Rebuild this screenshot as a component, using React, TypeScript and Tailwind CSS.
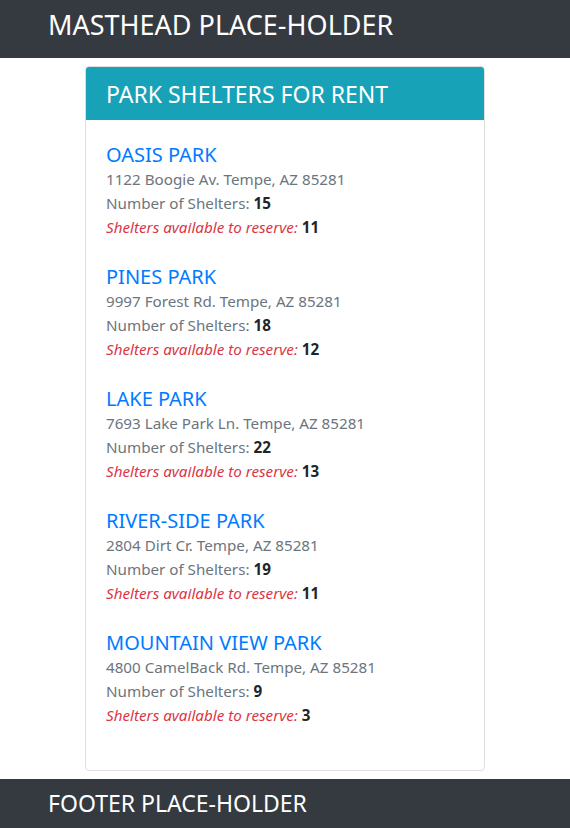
import React from 'react';

type Park = {
  name: string;
  address: string;
  shelters: number;
  available: number;
};

const parks: Park[] = [
  { name: 'OASIS PARK', address: '1122 Boogie Av. Tempe, AZ 85281', shelters: 15, available: 11 },
  { name: 'PINES PARK', address: '9997 Forest Rd. Tempe, AZ 85281', shelters: 18, available: 12 },
  { name: 'LAKE PARK', address: '7693 Lake Park Ln. Tempe, AZ 85281', shelters: 22, available: 13 },
  { name: 'RIVER-SIDE PARK', address: '2804 Dirt Cr. Tempe, AZ 85281', shelters: 19, available: 11 },
  { name: 'MOUNTAIN VIEW PARK', address: '4800 CamelBack Rd. Tempe, AZ 85281', shelters: 9, available: 3 },
];

const ParkItem: React.FC<{ park: Park }> = ({ park }) => (
  <div className="mb-[25px]">
    <h5 className="text-[20px] leading-[25px] text-[#007bff]">{park.name}</h5>
    <p className="text-[15.2px] leading-[24px] text-[#6c757d]">{park.address}</p>
    <p className="text-[15.2px] leading-[24px] text-[#6c757d]">
      Number of Shelters: <b className="font-bold text-[#212529]">{park.shelters}</b>
    </p>
    <p className="text-[15.2px] leading-[24px]">
      <i className="text-[#dc3545]">Shelters available to reserve:</i>{' '}
      <b className="font-bold text-[#212529]">{park.available}</b>
    </p>
  </div>
);

export default function App() {
  return (
    <div className="min-h-[828px] bg-white font-['Noto_Sans',sans-serif]">
      <header className="flex h-[58px] items-center bg-[#343a40] pb-[10px] pl-[48px]">
        <h1 className="text-[27px] leading-none text-white">MASTHEAD PLACE-HOLDER</h1>
      </header>

      <main className="flex justify-center pt-[8px] pb-[8px]">
        <section className="w-[400px] overflow-hidden rounded-[4px] border border-[#dfdfdf]">
          <div className="bg-[#17a2b8] px-[20px] pt-[13px] pb-[11px]">
            <h3 className="text-[23px] leading-[29px] text-white">PARK SHELTERS FOR RENT</h3>
          </div>
          <div className="px-[20px] pt-[22px] pb-[18px]">
            {parks.map((p) => (
              <ParkItem key={p.name} park={p} />
            ))}
          </div>
        </section>
      </main>

      <footer className="flex h-[49px] items-center bg-[#343a40] pl-[48px]">
        <p className="text-[23px] leading-none text-white">FOOTER PLACE-HOLDER</p>
      </footer>
    </div>
  );
}
